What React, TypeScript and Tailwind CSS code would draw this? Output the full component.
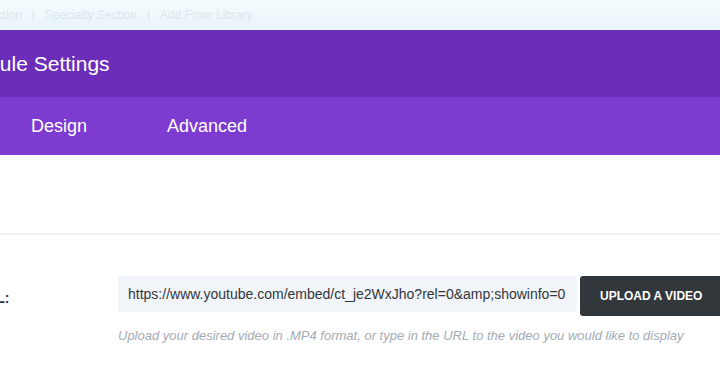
export default function App() {
    return (
        <div className="w-[720px] h-[375px] overflow-hidden bg-white" style={{ fontFamily: '"Liberation Sans", Arial, sans-serif' }}>
            {/* builder toolbar behind the modal */}
            <div className="h-[30px] bg-gradient-to-b from-[#f7fcfe] to-[#e7f4f9] flex items-center overflow-hidden">
                <div className="flex items-center text-[12px] text-[#dbe6ec] whitespace-nowrap -ml-[43px]">
                    <span>Add Section</span>
                    <span className="mx-[10px]">|</span>
                    <span>Specialty Section</span>
                    <span className="mx-[10px]">|</span>
                    <span>Add From Library</span>
                </div>
            </div>

            <div className="h-[67px] bg-[#6c2eb9] flex items-center overflow-hidden">
                <div className="text-[21px] text-white whitespace-nowrap -ml-[41px]">Module Settings</div>
            </div>

            <div className="h-[58px] bg-[#7e3bd0] flex items-center text-[18px] text-white whitespace-nowrap">
                <div className="ml-[31px]">Design</div>
                <div className="ml-[80px]">Advanced</div>
            </div>

            <div className="h-[78px]"></div>
            <div className="h-[2px] bg-[#eef1f4]"></div>

            <div className="flex flex-col pt-[41px]">
                <div className="flex items-start">
                    <div className="w-[118px] shrink-0 overflow-hidden h-[36px] flex items-center">
                        <div className="text-[14px] font-bold text-[#32373c] whitespace-nowrap -ml-[24px] mt-[8px]">URL:</div>
                    </div>
                    <div className="w-[459px] shrink-0 h-[36px] bg-[#f1f4f8] rounded-[3px] flex items-center pl-[10px] text-[14px] text-[#32373c] whitespace-nowrap overflow-hidden">
                        https://www.youtube.com/embed/ct_je2WxJho?rel=0&amp;amp;showinfo=0
                    </div>
                    <div className="ml-[3px] h-[40px] w-[160px] shrink-0 bg-[#32373c] rounded-l-[3px] flex items-center pl-[20px] text-[12px] font-bold text-white whitespace-nowrap">
                        UPLOAD A VIDEO
                    </div>
                </div>
                <div className="ml-[118px] mt-[12px] text-[13px] leading-[15px] italic text-[#a3abb4] whitespace-nowrap">
                    Upload your desired video in .MP4 format, or type in the URL to the video you would like to display
                </div>
            </div>
        </div>
    )
}
